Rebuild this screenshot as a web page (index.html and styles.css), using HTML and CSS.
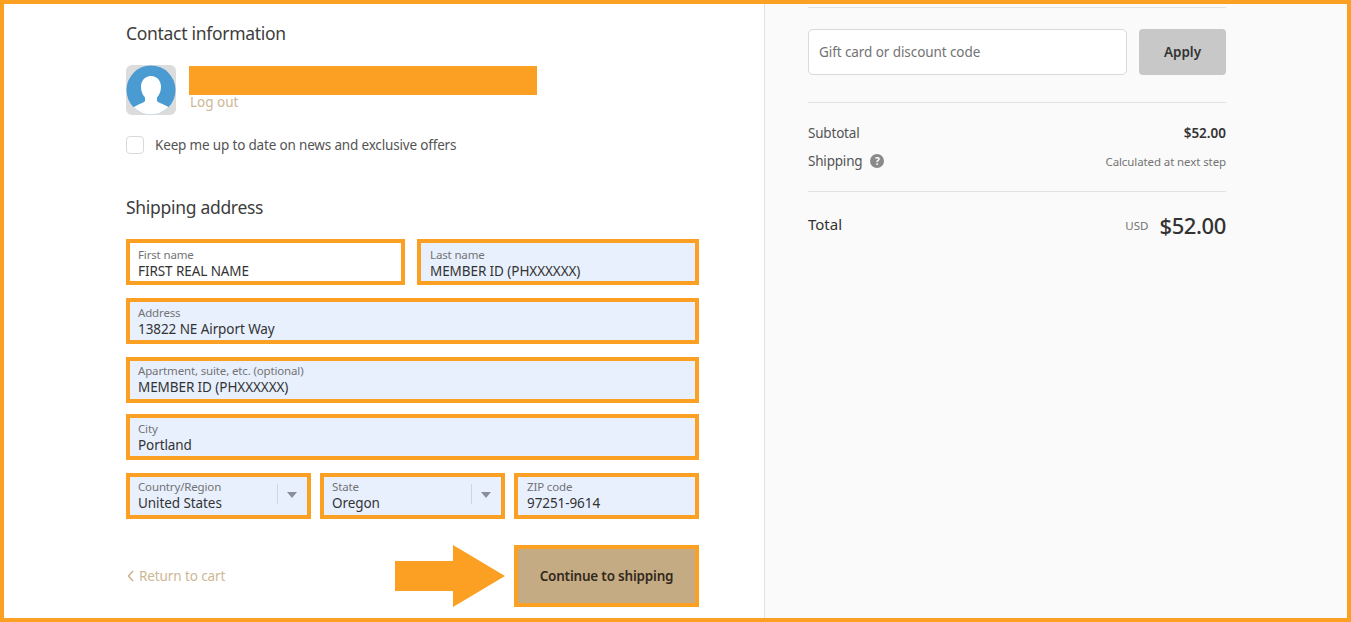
FILE: index.html
```html
<!DOCTYPE html>
<html lang="en">
<head>
<meta charset="utf-8">
<title>Checkout</title>
<link rel="stylesheet" href="styles.css">
</head>
<body>
<div class="frame">
  <main class="main">
    <h2 class="heading contact-heading">Contact information</h2>
    <div class="account">
      <svg class="avatar" width="50" height="50" viewBox="0 0 50 50">
        <defs><clipPath id="disc"><circle cx="25" cy="25" r="24.5"/></clipPath></defs>
        <rect width="50" height="50" rx="6" fill="#dcdcdc"/>
        <circle cx="25" cy="25" r="24.5" fill="#4a9bd2"/>
        <g clip-path="url(#disc)">
          <path d="M25 11c-6.500 0-10 5-10 11 0 4.500 1.800 8 4 10.500v3.500c-1 2-9 3.500-12.500 7.500L9 50h32l3-6.500c-3.500-4-12-5.500-13-7.500v-3.500c2.200-2.500 4-6 4-10.500 0-6-3.500-11-10-11z" fill="#fff"/>
        </g>
      </svg>
      <div class="account-text">
        <div class="redaction"></div>
        <a class="logout">Log out</a>
      </div>
    </div>
    <label class="newsletter"><span class="checkbox"></span><span>Keep me up to date on news and exclusive offers</span></label>
    <h2 class="heading shipping-heading">Shipping address</h2>
    <div class="form">
      <div class="row row-two">
        <div class="field plain"><span class="label">First name</span><span class="value">FIRST REAL NAME</span></div>
        <div class="field inset"><span class="label">Last name</span><span class="value">MEMBER ID (PHXXXXXX)</span></div>
      </div>
      <div class="row row-address"><div class="field"><span class="label">Address</span><span class="value">13822 NE Airport Way</span></div></div>
      <div class="row row-apartment"><div class="field"><span class="label">Apartment, suite, etc. (optional)</span><span class="value">MEMBER ID (PHXXXXXX)</span></div></div>
      <div class="row row-city"><div class="field"><span class="label">City</span><span class="value">Portland</span></div></div>
      <div class="row row-three">
        <div class="field select"><span class="label">Country/Region</span><span class="value">United States</span><span class="caret"></span></div>
        <div class="field select"><span class="label">State</span><span class="value">Oregon</span><span class="caret"></span></div>
        <div class="field inset"><span class="label">ZIP code</span><span class="value">97251-9614</span></div>
      </div>
    </div>
    <div class="actions">
      <a class="back"><svg class="chevron" width="7" height="12" viewBox="0 0 7 12"><path d="M6 1 1.500 6 6 11" fill="none" stroke="#c9ae8a" stroke-width="1.500"/></svg>Return to cart</a>
      <svg class="arrow" width="110" height="62" viewBox="0 0 110 62"><path d="M0 16h58V0l52 31-52 31V46H0z" fill="#fca024"/></svg>
      <button class="continue">Continue to shipping</button>
    </div>
  </main>
  <aside class="side">
    <div class="rule rule-top"></div>
    <div class="discount">
      <div class="discount-input">Gift card or discount code</div>
      <button class="apply">Apply</button>
    </div>
    <div class="rule rule-mid"></div>
    <div class="line line-sub"><span>Subtotal</span><strong class="amount">$52.00</strong></div>
    <div class="line line-ship"><span class="ship-label">Shipping <span class="help">?</span></span><span class="next-step">Calculated at next step</span></div>
    <div class="rule rule-low"></div>
    <div class="total">
      <span class="total-label">Total</span>
      <span class="total-right"><span class="currency">USD</span><span class="total-amount">$52.00</span></span>
    </div>
  </aside>
</div>
</body>
</html>
```
FILE: styles.css
```css
* { box-sizing: border-box; }
html, body { margin: 0; padding: 0; }
body {
  width: 1351px;
  height: 622px;
  overflow: hidden;
  font-family: "Noto Sans", "Open Sans", sans-serif;
  color: #545454;
  background: #fff;
}
.frame {
  display: flex;
  width: 1351px;
  height: 622px;
  border: 4px solid #fca024;
  overflow: hidden;
}
.main {
  width: 760px;
  flex: none;
  padding: 0 0 0 122px;
}
.heading {
  margin: 0;
  font-size: 17.500px;
  line-height: 24px;
  font-weight: 400;
  letter-spacing: -0.300px;
  color: #3d3d3d;
}
.contact-heading { margin-top: 17px; }
.account {
  display: flex;
  margin-top: 20px;
  gap: 13px;
  height: 50px;
}
.avatar { display: block; flex: none; }
.account-text { width: 348px; padding-top: 1px; }
.redaction { height: 29px; background: #fca024; }
.logout {
  display: block;
  font-size: 13.500px;
  line-height: 14px;
  color: #cdb795;
  margin-left: 1px;
}
.newsletter {
  display: flex;
  align-items: center;
  gap: 11px;
  margin-top: 21px;
  height: 18px;
  font-size: 13.500px;
  letter-spacing: -0.170px;
}
.checkbox {
  width: 18px;
  height: 18px;
  background: #fff;
  border: 1px solid #d9d9d9;
  border-radius: 4px;
}
.shipping-heading { margin-top: 41px; }
.form { margin-top: 20px; width: 573px; }
.row { display: flex; margin-bottom: 13px; }
.row-two { gap: 12px; }
.row-two .field:first-child { flex: 0 0 279px; }
.row-apartment { margin-bottom: 11px; }
.row-three { gap: 9px; margin-bottom: 0; }
.row-three .field { flex: 0 0 185px; }
.field {
  position: relative;
  flex: 1;
  height: 46px;
  border: 4px solid #fca024;
  background: #e8f0fe;
  padding: 5px 8px 0;
}
.field.plain { background: #fff; }
.field.inset { padding-left: 9px; }
.row-address .field,
.row-city .field { padding-top: 4px; }
.row-apartment .field,
.row-three .field { padding-top: 3px; }
.label {
  display: block;
  font-size: 11.500px;
  line-height: 14px;
  letter-spacing: -0.150px;
  color: #737373;
}
.value {
  display: block;
  font-size: 13.500px;
  line-height: 18px;
  letter-spacing: -0.080px;
  color: #333;
}
.select::before {
  content: "";
  position: absolute;
  top: 7px;
  right: 29px;
  width: 1px;
  height: 20px;
  background: #d0d4dc;
}
.caret {
  position: absolute;
  top: 15px;
  right: 10px;
  width: 0;
  height: 0;
  border-left: 5px solid transparent;
  border-right: 5px solid transparent;
  border-top: 6px solid #8a8f99;
}
.actions {
  display: flex;
  align-items: center;
  width: 573px;
  margin-top: 26px;
}
.back {
  display: flex;
  align-items: center;
  gap: 5px;
  font-size: 13.500px;
  letter-spacing: -0.100px;
  color: #cdb795;
  margin-left: 1px;
  width: 268px;
}
.arrow { display: block; flex: none; }
.continue {
  width: 185px;
  height: 62px;
  margin-left: 9px;
  border: 4px solid #fca024;
  background: #c5ab84;
  color: #33291c;
  font-family: inherit;
  font-size: 13.500px;
  font-weight: 600;
  letter-spacing: -0.200px;
  padding: 0;
}
.side {
  flex: 1;
  background: #fafafa;
  border-left: 1px solid #e1e1e1;
  padding: 0 0 0 43px;
}
.rule { width: 418px; height: 1px; background: #e1e1e1; }
.rule-top { margin-top: 3px; }
.discount { display: flex; gap: 12px; width: 418px; margin-top: 21px; }
.discount-input {
  width: 319px;
  height: 46px;
  background: #fff;
  border: 1px solid #d9d9d9;
  border-radius: 5px;
  padding-left: 10px;
  font-size: 13.500px;
  letter-spacing: -0.080px;
  line-height: 44px;
  color: #737373;
}
.apply {
  width: 87px;
  height: 46px;
  border: 0;
  border-radius: 4px;
  background: #c8c8c8;
  color: #333;
  font-family: inherit;
  font-size: 13.500px;
  font-weight: 600;
  padding: 0;
}
.rule-mid { margin-top: 27px; }
.line {
  display: flex;
  justify-content: space-between;
  align-items: center;
  width: 418px;
  height: 20px;
  font-size: 13.500px;
  letter-spacing: -0.200px;
  color: #545454;
}
.line-sub { margin-top: 20px; }
.line-ship { margin-top: 8px; }
.amount { font-weight: 600; color: #333; font-size: 13.500px; letter-spacing: 0; }
.ship-label { display: flex; align-items: center; gap: 8px; }
.help {
  display: block;
  width: 14px;
  height: 14px;
  border-radius: 50%;
  background: #8a8a8a;
  color: #fff;
  font-size: 10px;
  font-weight: 700;
  line-height: 14px;
  text-align: center;
}
.next-step { font-size: 11.500px; letter-spacing: -0.100px; color: #737373; }
.rule-low { margin-top: 20px; }
.total {
  display: flex;
  justify-content: space-between;
  align-items: center;
  width: 418px;
  margin-top: 15px;
  height: 36px;
}
.total-label { font-size: 15px; color: #333; margin-top: -2px; }
.total-right { display: flex; align-items: center; gap: 11px; }
.currency { font-size: 11.500px; color: #737373; }
.total-amount { font-size: 22px; font-weight: 500; color: #333; letter-spacing: -0.400px; }
```
